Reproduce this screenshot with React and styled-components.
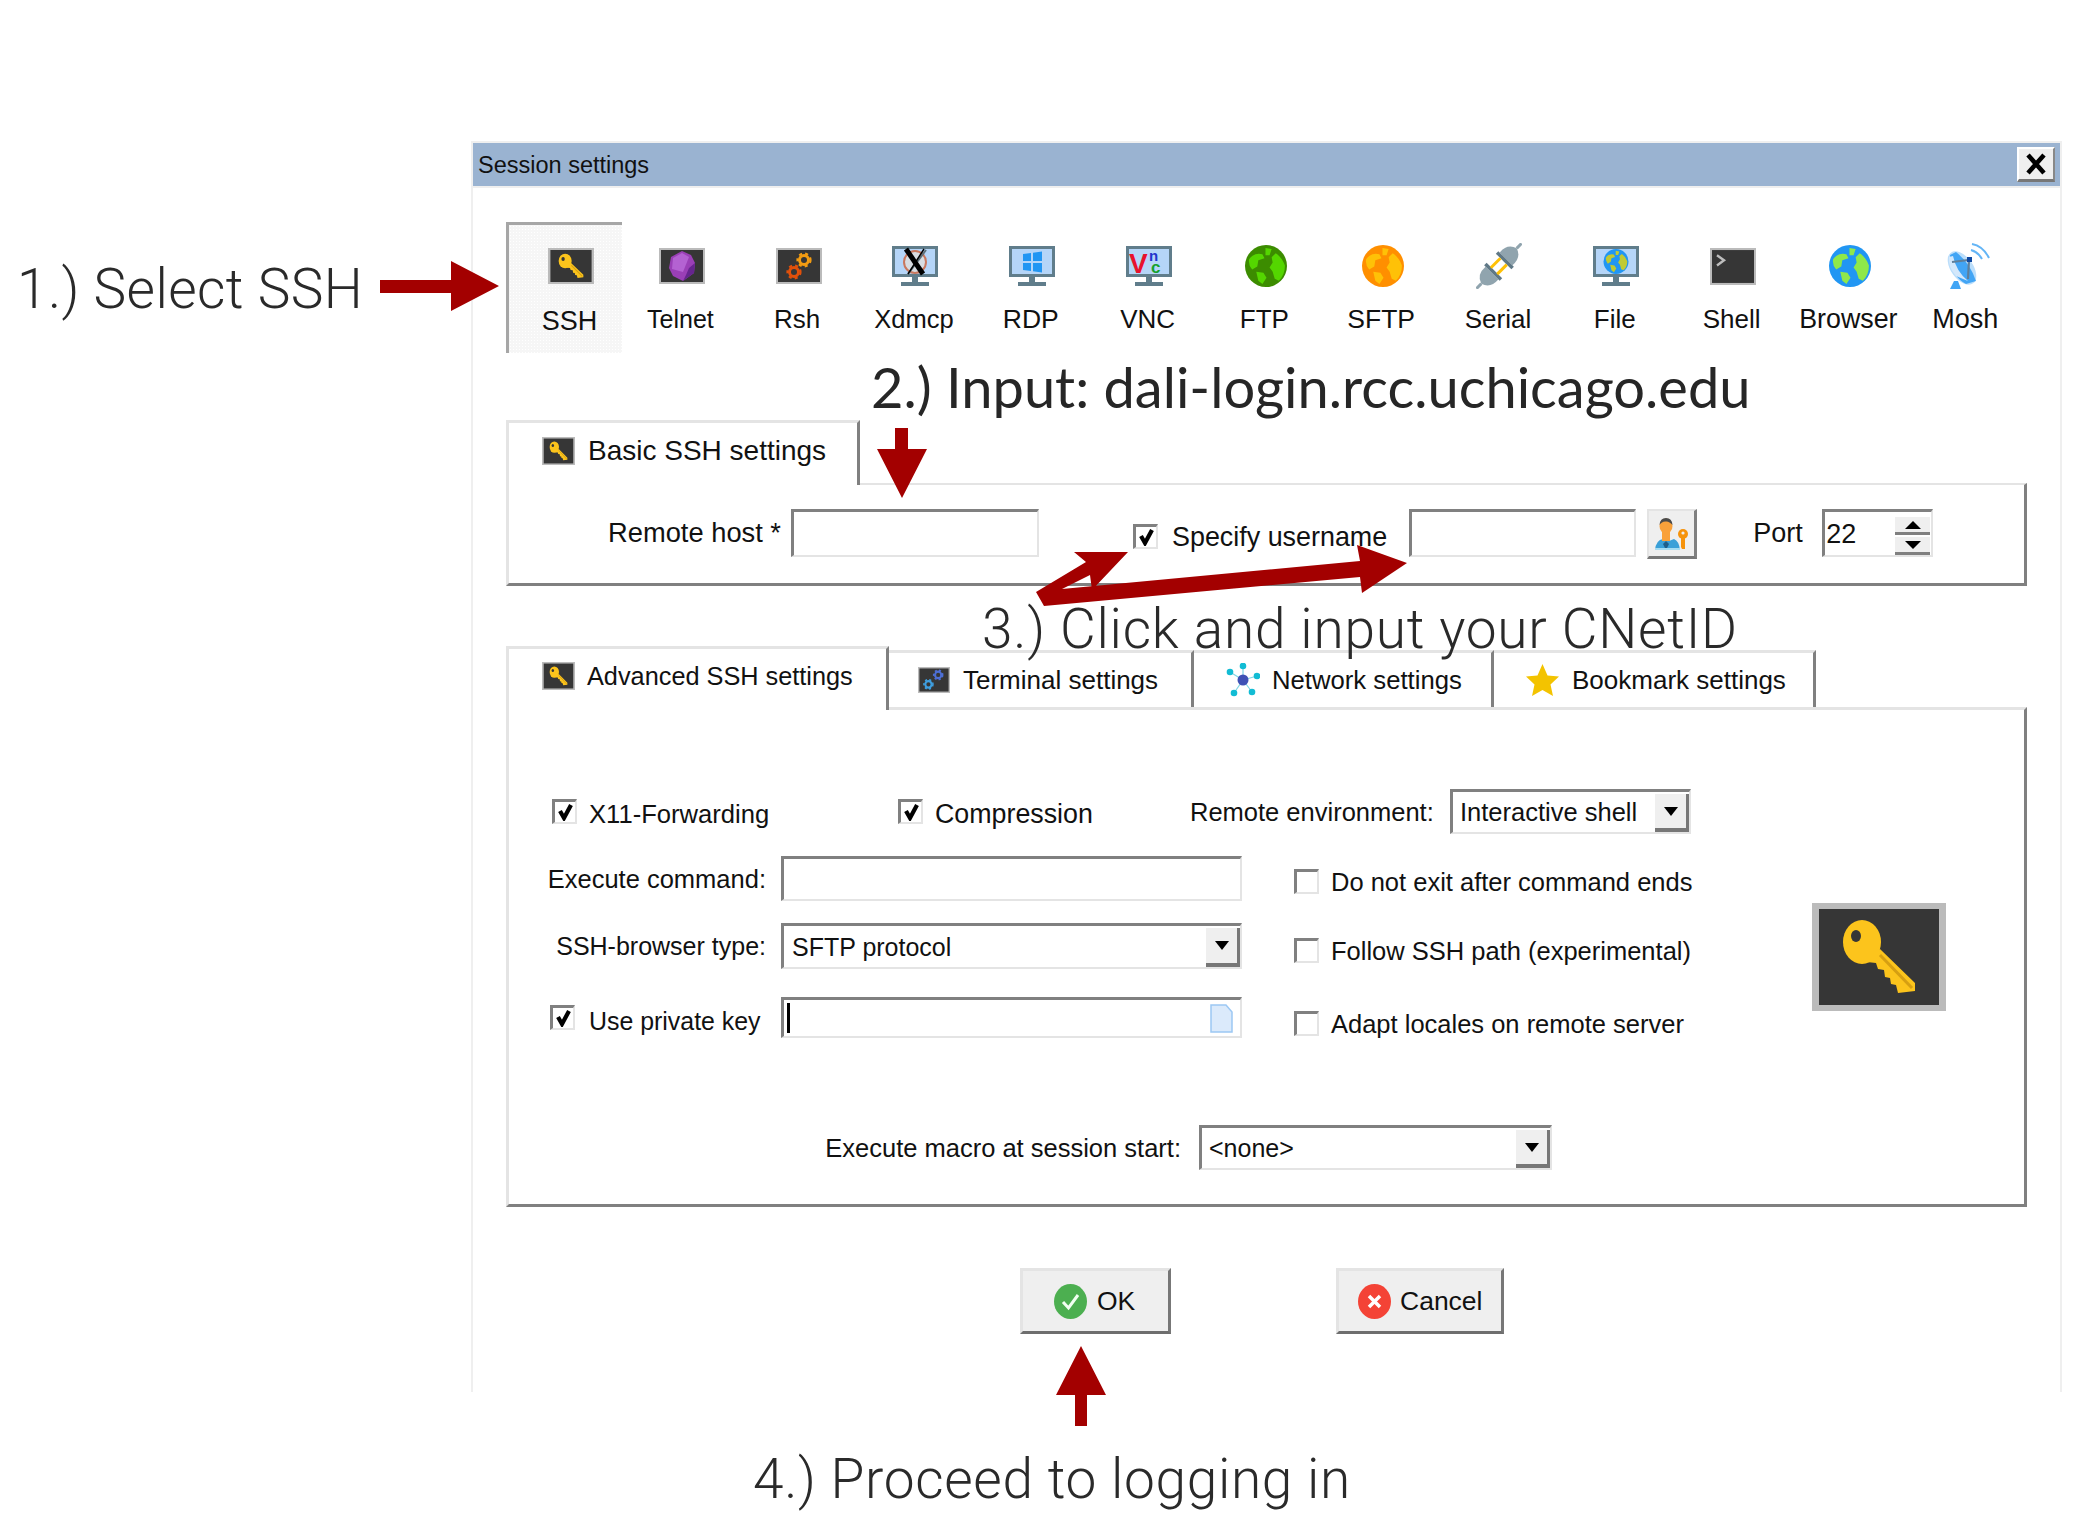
import React from 'react';
import styled, { createGlobalStyle } from 'styled-components';

const Global = createGlobalStyle`
  html, body { margin: 0; padding: 0; background: #fff; }
  body { font-family: "Liberation Sans", Arial, sans-serif; color: #111; }
  * { box-sizing: border-box; }
`;

const DARK = '#808080';
const LIGHT = '#e4e4e4';
const RED = '#a30000';

const Page = styled.div`
  position: relative; width: 2086px; height: 1536px; overflow: hidden; padding: 141px 0 0 471px;
`;
const Window = styled.div`
  width: 1591px; height: 1251px;
  border-top: 2px solid #efefef; border-left: 2px solid #efefef; border-right: 2px solid #efefef;
`;
const TitleBar = styled.div`
  height: 45px; background: #9ab3d1; border-bottom: 2px solid #efefef;
  display: flex; align-items: center; justify-content: space-between; padding: 0 5px;
`;
const TitleText = styled.span`font-size: 23.5px; line-height: 43px; color: #111; padding-top: 2px;`;
const CloseButton = styled.div`
  width: 38px; height: 35px; background: #efefef; display: flex; align-items: center; justify-content: center;
  border-top: 2px solid #fff; border-left: 2px solid #fff; border-right: 2px solid #888; border-bottom: 3px solid #777;
`;

const TileRow = styled.div`display: flex; margin: 34px 0 0 33px; height: 131px;`;
const Tile = styled.div`
  width: ${p => (p.$active ? '116px' : '116.8px')}; height: 131px; display: flex; flex-direction: column; align-items: center;
  padding-top: ${p => (p.$active ? '18px' : '21px')}; padding-left: ${p => (p.$active ? '8px' : '0')};
  ${p => p.$active ? `
    border-top: 3px solid #a6a6a6; border-left: 3px solid #a6a6a6;
    background-color: #f6f6f6;
    background-image: radial-gradient(#fff 0.8px, transparent 1px);
    background-size: 3px 3px;
  ` : ''}
`;
const TileIcon = styled.div`height: 46px; display: flex; align-items: center; justify-content: center; margin-left: 3px;`;
const TileLabel = styled.span`
  font-size: ${p => p.$s || 26.5}px; line-height: 30px; margin-top: ${p => (p.$active ? '17px' : '15px')}; white-space: nowrap;
`;

const Section = styled.section`width: 1521px; margin: ${p => p.$mt}px 0 0 33px;`;
const TabStrip = styled.div`display: flex; align-items: flex-end; height: ${p => p.$h}px;`;
const Tab = styled.div`
  position: relative; z-index: 1; width: ${p => p.$w}px; height: ${p => p.$h}px; margin-bottom: ${p => p.$mb || 0}px;
  display: flex; align-items: center; gap: ${p => p.$gap}px; background: #fff; white-space: nowrap;
  padding: 0 0 ${p => p.$pb || 0}px ${p => p.$pl}px;
  border-top: 3px solid ${LIGHT}; border-right: 3px solid ${DARK};
  ${p => (p.$first ? `border-left: 3px solid ${LIGHT};` : '')}
`;
const TabText = styled.span`font-size: ${p => p.$s || 26}px; line-height: 30px;`;

const Panel = styled.div`
  height: ${p => p.$h}px; background: #fff;
  border-top: ${p => p.$bt}px solid ${LIGHT}; border-left: 3px solid ${LIGHT};
  border-right: 3px solid ${DARK}; border-bottom: 3px solid ${DARK};
`;
const BasicRow = styled.div`display: flex; align-items: center; height: 48px; margin-top: 24px;`;
const RightLabel = styled.label`
  width: ${p => p.$w}px; text-align: right; flex: none; font-size: ${p => p.$s || 26}px; line-height: 30px; white-space: nowrap;
`;
const PortLabel = styled.label`margin-left: 56px; width: 65px; flex: none; font-size: 27px; line-height: 30px;`;

const Field = styled.div`
  position: relative; flex: none; display: flex; align-items: center;
  width: ${p => p.$w}px; height: ${p => p.$h}px; margin-left: ${p => p.$ml || 0}px; background: #fff;
  border-top: 3px solid ${DARK}; border-left: 3px solid ${DARK};
  border-right: 2px solid ${LIGHT}; border-bottom: 2px solid ${LIGHT};
`;
const FieldText = styled.span`
  font-size: ${p => p.$s || 26}px; line-height: 30px; padding-left: ${p => p.$pl}px; flex: 1; white-space: nowrap;
`;
const DropButton = styled.div`
  width: 34px; align-self: stretch; margin: 2px 0 0; background: #efefef; display: flex; align-items: center; justify-content: center;
  border-right: 3px solid #777; border-bottom: 4px solid #777;
`;
const DownTriangle = styled.i`
  display: block; width: 0; height: 0; border-left: 7px solid transparent; border-right: 7px solid transparent; border-top: 9px solid #000;
`;
const Caret = styled.i`display: block; width: 3px; height: 30px; margin-left: 3px; background: #000;`;
const FileGlyph = styled.div`margin-left: auto; margin-right: 7px; display: flex;`;

const Spin = styled.div`
  position: absolute; right: 1px; top: 5px; bottom: 0; width: 35px; display: flex; flex-direction: column; gap: 2px;
`;
const SpinButton = styled.div`
  flex: 1; background: #efefef; border-bottom: 3px solid #808080; display: flex; align-items: center; justify-content: center;
`;
const UpTriangle = styled.i`
  display: block; width: 0; height: 0; border-left: 8px solid transparent; border-right: 8px solid transparent; border-bottom: 8px solid #000;
`;
const SpinDown = styled.i`
  display: block; width: 0; height: 0; border-left: 8px solid transparent; border-right: 8px solid transparent; border-top: 8px solid #000;
`;
const IconButton = styled.div`
  flex: none; width: 50px; height: 50px; margin-left: 11px; align-self: flex-start; background: #efefef;
  display: flex; align-items: center; justify-content: center;
  border-top: 2px solid ${LIGHT}; border-left: 2px solid ${LIGHT}; border-right: 3px solid #808080; border-bottom: 3px solid #777;
`;

const CheckGroup = styled.label`
  display: flex; align-items: center; flex: none; gap: ${p => p.$gap || 12}px;
  width: ${p => (p.$w ? `${p.$w}px` : 'auto')}; margin: ${p => p.$mt || 0}px 0 0 ${p => p.$ml || 0}px; white-space: nowrap;
`;
const CheckBox = styled.span`
  flex: none; width: 25px; height: 25px; display: flex; align-items: center; justify-content: center; background: #fff;
  border-top: 3px solid ${DARK}; border-left: 3px solid ${DARK}; border-right: 2px solid ${LIGHT}; border-bottom: 2px solid ${LIGHT};
`;
const CheckText = styled.span`
  font-size: ${p => p.$s || 26}px; line-height: 26px; position: relative; top: ${p => p.$dy ?? 2}px;
`;

const TopRow = styled.div`display: flex; align-items: center; height: 45px; margin: 79px 0 0 43px;`;
const BodyRow = styled.div`display: flex; margin-top: 22px; height: 182px;`;
const LeftColumn = styled.div`width: 733px; flex: none;`;
const FieldRow = styled.div`display: flex; align-items: center; margin-top: ${p => p.$mt || 0}px; height: ${p => p.$h}px;`;
const MidColumn = styled.div`margin-left: 52px; width: 518px; flex: none; padding-top: 12px;`;
const BigKey = styled.div`margin-top: 47px; flex: none; display: flex;`;
const MacroRow = styled.div`display: flex; align-items: center; margin-top: 87px; height: 45px;`;

const ButtonRow = styled.div`display: flex; gap: 165px; margin: 61px 0 0 547px;`;
const ActionButton = styled.div`
  width: ${p => p.$w}px; height: 66px; background: #efefef; display: flex; align-items: center; gap: ${p => p.$gap}px; padding-left: ${p => p.$pl}px;
  border-top: 3px solid ${LIGHT}; border-left: 3px solid ${LIGHT}; border-right: 3px solid #777; border-bottom: 3px solid #6e6e6e;
`;
const ActionText = styled.span`font-size: 26.5px; line-height: 30px;`;

const Note = styled.div`
  position: absolute; left: ${p => p.$x}px; top: ${p => p.$y}px; white-space: nowrap; z-index: 3; line-height: 70px;
  font-family: ${p => (p.$humanist ? '"Lato", "Open Sans", sans-serif' : '"Roboto", "Liberation Sans", sans-serif')};
  font-weight: ${p => (p.$humanist ? 400 : 300)};
  font-size: ${p => p.$s}px; letter-spacing: ${p => p.$ls || 0}px; color: ${p => (p.$humanist ? '#262626' : '#2a2a2a')};
`;
const ArrowLayer = styled.svg`position: absolute; left: 0; top: 0; z-index: 4; pointer-events: none;`;

/* ---------- icons ---------- */
const CloseX = () => (
  <svg width="22" height="24" viewBox="0 0 22 24"><path d="M3 3l16 18M19 3L3 21" stroke="#000" strokeWidth="4.5" fill="none" /></svg>
);

const KeyShape = () => (
  <>
    <ellipse cx="50" cy="39" rx="19" ry="22" fill="#fcc41c" />
    <ellipse cx="44" cy="33" rx="5" ry="6" fill="#363636" />
    <path d="M62 50L68 46L103 80L103 88L86 90L84 82L79 81L78 75L73 74L72 67L66 66L64 60L55 59Z" fill="#fcc41c" />
    <path d="M68 52L100 85" stroke="#d69f12" strokeWidth="3" />
  </>
);
const KeyIcon = ({ w = 46, h = 36 }) => (
  <svg width={w} height={h} viewBox="0 0 134 108" preserveAspectRatio="none">
    <rect width="134" height="108" fill="#bbb" />
    <rect x="7" y="6" width="120" height="96" fill="#363636" />
    <KeyShape />
  </svg>
);
const DarkTile = ({ w = 46, h = 36, children }) => (
  <svg width={w} height={h} viewBox="0 0 46 36" preserveAspectRatio="none">
    <rect width="46" height="36" fill="#bbb" />
    <rect x="2" y="2" width="42" height="32" fill="#363636" />
    {children}
  </svg>
);
const TelnetIcon = () => (
  <DarkTile>
    <path d="M23 3L32 7L36 15L35 25L24 33L14 28L10 20L12 9Z" fill="#9a3fb6" />
    <path d="M14 10L23 5L30 9L24 24L13 21Z" fill="#b462d2" />
    <path d="M24 33L35 25L36 15L30 20L27 27Z" fill="#66258f" />
  </DarkTile>
);
const Gear = ({ cx, cy, color, r = 4.5 }) => (
  <g>
    <circle cx={cx} cy={cy} r={r} fill="none" stroke={color} strokeWidth="3" />
    <circle cx={cx} cy={cy} r={r + 2} fill="none" stroke={color} strokeWidth="2.2" strokeDasharray="3 3.2" />
  </g>
);
const RshIcon = () => (
  <DarkTile>
    <Gear cx={28} cy={12} color="#f39c12" />
    <Gear cx={18} cy={24} color="#e2500a" />
  </DarkTile>
);
const TerminalIcon = () => (
  <DarkTile w={32} h={26}>
    <Gear cx={29} cy={11} color="#4d6fd6" />
    <Gear cx={15} cy={24} color="#3f9fe0" />
  </DarkTile>
);
const ShellIcon = () => (
  <DarkTile h={37}>
    <path d="M7 7L14 12L7 17" fill="none" stroke="#bdbdbd" strokeWidth="2.4" />
  </DarkTile>
);
const Monitor = ({ children }) => (
  <svg width="46" height="41" viewBox="0 0 46 41">
    <rect width="46" height="31" fill="#607d8b" />
    <rect x="3" y="3" width="40" height="25" fill="#b5d5f8" />
    {children}
    <rect x="20" y="31" width="6" height="5" fill="#607d8b" />
    <rect x="9" y="36" width="28" height="4" fill="#607d8b" />
  </svg>
);
const XdmcpIcon = () => (
  <Monitor>
    <circle cx="23" cy="16" r="11" fill="#d8dde2" stroke="#c9785e" strokeWidth="2" />
    <path d="M34 4L16 28" stroke="#5d6f78" strokeWidth="2" />
    <path d="M14 3L31 28" stroke="#000" strokeWidth="5" />
    <path d="M32 3L16 28" stroke="#000" strokeWidth="1.500" />
  </Monitor>
);
const RdpIcon = () => (
  <Monitor>
    <path d="M14 8L22 7V15H14ZM24 6.700L33 5.500V15H24ZM14 17H22V25L14 24ZM24 17H33V26.500L24 25.300Z" fill="#2196f3" />
  </Monitor>
);
const VncLetter = styled.text`font-family: "Liberation Sans", sans-serif; font-weight: 700;`;
const VncIcon = () => (
  <Monitor>
    <VncLetter x="3" y="27" fontSize="28" fill="#e8112d">V</VncLetter>
    <VncLetter x="23" y="15" fontSize="15" fill="#2233cc">n</VncLetter>
    <VncLetter x="25" y="27" fontSize="17" fill="#16a02c">c</VncLetter>
  </Monitor>
);
const Continents = ({ fill }) => (
  <path fill={fill} d="M4 14Q9 7 17 9L19 13L13 15L12 21L7 24Q3 19 4 14ZM20 3L26 4L24 10L20 10ZM30 8Q36 12 39 20Q39 29 33 35L29 33L27 26L24 22L27 17L26 12ZM11 26L18 27L21 32L17 38L13 35Z" />
);
const Globe = ({ base, land, size = 42 }) => (
  <svg width={size} height={size} viewBox="0 0 41 41">
    <circle cx="20.500" cy="20.500" r="20.500" fill={base} />
    <Continents fill={land} />
  </svg>
);
const FileIcon = () => (
  <Monitor>
    <g transform="translate(10.500 3) scale(0.61)">
      <circle cx="20.500" cy="20.500" r="20.500" fill="#2196f3" />
      <Continents fill="#c0ca33" />
    </g>
  </Monitor>
);
const SerialIcon = () => (
  <svg width="46" height="46" viewBox="-23 -23 46 46">
    <g transform="rotate(-45)">
      <path d="M-10 -9Q-22 -10 -25 0Q-22 10 -10 9Z" fill="#90a4ae" />
      <path d="M-25 0H-32" stroke="#90a4ae" strokeWidth="3" />
      <path d="M10 -9Q22 -10 25 0Q22 10 10 9Z" fill="#90a4ae" />
      <path d="M25 0H32" stroke="#90a4ae" strokeWidth="3" />
      <rect x="-10" y="-11" width="3.500" height="22" fill="#5f7886" />
      <rect x="6.500" y="-11" width="3.500" height="22" fill="#5f7886" />
      <rect x="-7" y="-6" width="13.500" height="3" fill="#ffc107" />
      <rect x="-7" y="3" width="13.500" height="3" fill="#ffc107" />
    </g>
  </svg>
);
const MoshIcon = () => (
  <svg width="46" height="46" viewBox="0 0 46 46">
    <path d="M6 46H17L14 38H10Z" fill="#42a5f5" />
    <ellipse cx="18" cy="25" rx="11" ry="19" transform="rotate(-36 18 25)" fill="#bbdefb" />
    <path d="M6 12L12 9Q26 20 32 38L22 41Q8 34 6 12Z" fill="#42a5f5" />
    <path d="M9 13Q12 28 24 38L12 33Q4 24 5 14Z" fill="#d4e8fb" />
    <path d="M8 19L25 17L24 36" fill="none" stroke="#5f7f9a" strokeWidth="2.200" />
    <rect x="23" y="14" width="5" height="5" fill="#0d47a1" />
    <path d="M28 1Q39 3 45 15M27 7Q34 9 38 16" fill="none" stroke="#64b5f6" strokeWidth="2" />
  </svg>
);
const NetworkIcon = () => (
  <svg width="34" height="35" viewBox="0 0 34 35">
    <path d="M17 17L17 3M17 17L4 9M17 17L31 13M17 17L8 30M17 17L26 29" stroke="#7fd6e6" strokeWidth="1.200" />
    <circle cx="17" cy="17" r="5.500" fill="#3f51b5" />
    {[[17, 3], [4, 9], [31, 13], [8, 30], [26, 29]].map(([cx, cy]) => (
      <circle key={cx} cx={cx} cy={cy} r="3.300" fill="#12bcd4" />
    ))}
  </svg>
);
const StarIcon = () => (
  <svg width="33" height="32" viewBox="0 0 33 32">
    <path d="M16.500 0L21.500 11.500L33 12.500L24.500 20.500L27 32L16.500 26L6 32L8.500 20.500L0 12.500L11.500 11.500Z" fill="#f3c300" />
  </svg>
);
const UserKeyIcon = () => (
  <svg width="33" height="33" viewBox="0 0 33 33">
    <path d="M0 33Q1 23 8 22L14 24L19 22Q24 24 25 33Z" fill="#3aa0d8" />
    <rect x="7" y="15" width="8" height="9" fill="#f9a13a" />
    <ellipse cx="11" cy="9" rx="6.500" ry="7.500" fill="#f9a13a" />
    <path d="M4.500 8Q5 1 11 1Q17 1 17.500 8Q14 4 11 4.500Q7 4 4.500 8Z" fill="#4b4b4b" />
    <path d="M8 27L11 24L14 27L11 33Z" fill="#1f5f8a" />
    <path d="M0 31H25V33H0Z" fill="#a5dcf2" />
    <circle cx="28" cy="17" r="5" fill="#f6930c" />
    <circle cx="28" cy="16" r="1.600" fill="#efefef" />
    <path d="M26 20H30V32H27L26 30Z" fill="#f6930c" />
  </svg>
);
const PageGlyph = () => (
  <svg width="23" height="29" viewBox="0 0 23 29">
    <path d="M1 1H16L22 8V28H1Z" fill="#dbeafb" stroke="#9cc8f4" strokeWidth="1.500" />
  </svg>
);
const CheckMark = () => (
  <svg width="17" height="18" viewBox="0 0 17 18"><path d="M3 8L7 15L14 2" fill="none" stroke="#000" strokeWidth="4.200" /></svg>
);
const OkIcon = () => (
  <svg width="33" height="35" viewBox="0 0 33 35">
    <ellipse cx="16.500" cy="17.500" rx="16.500" ry="17.500" fill="#4caf50" />
    <path d="M9 18L14.500 24L24 11" fill="none" stroke="#f1fff1" strokeWidth="3" />
  </svg>
);
const CancelIcon = () => (
  <svg width="33" height="35" viewBox="0 0 33 35">
    <ellipse cx="16.500" cy="17.500" rx="16.500" ry="17.500" fill="#f44336" />
    <path d="M11 12L22 23M22 12L11 23" fill="none" stroke="#fff" strokeWidth="3.500" />
  </svg>
);

const tiles = [
  ['SSH', <KeyIcon key="k" />, 27],
  ['Telnet', <TelnetIcon key="t" />, 25],
  ['Rsh', <RshIcon key="r" />, 26],
  ['Xdmcp', <XdmcpIcon key="x" />, 25.5],
  ['RDP', <RdpIcon key="d" />, 26.5],
  ['VNC', <VncIcon key="v" />, 26],
  ['FTP', <Globe key="f" base="#3c8c00" land="#54d600" />, 26],
  ['SFTP', <Globe key="s" base="#ff8f00" land="#ffc107" />, 26.5],
  ['Serial', <SerialIcon key="e" />, 26],
  ['File', <FileIcon key="i" />, 26],
  ['Shell', <ShellIcon key="h" />, 26],
  ['Browser', <Globe key="b" base="#2196f3" land="#8fe84a" />, 26.8],
  ['Mosh', <MoshIcon key="m" />, 27],
];

const Check = ({ on = true, text, s, gap, w, ml, mt, dy }) => (
  <CheckGroup $gap={gap} $w={w} $ml={ml} $mt={mt}>
    <CheckBox>{on && <CheckMark />}</CheckBox>
    <CheckText $s={s} $dy={dy}>{text}</CheckText>
  </CheckGroup>
);

export default function App() {
  return (
    <Page>
      <Global />
      <Window>
        <TitleBar>
          <TitleText>Session settings</TitleText>
          <CloseButton><CloseX /></CloseButton>
        </TitleBar>

        <TileRow>
          {tiles.map(([label, icon, s], i) => (
            <Tile key={label} $active={i === 0}>
              <TileIcon>{icon}</TileIcon>
              <TileLabel $s={s} $active={i === 0}>{label}</TileLabel>
            </Tile>
          ))}
        </TileRow>

        <Section $mt={67}>
          <TabStrip $h={63}>
            <Tab $first $w={354} $h={65} $mb={-2} $pl={33} $gap={13} $pb={6}>
              <KeyIcon w={33} h={28} />
              <TabText $s={28}>Basic SSH settings</TabText>
            </Tab>
          </TabStrip>
          <Panel $h={103} $bt={2}>
            <BasicRow>
              <RightLabel $w={272} $s={27.3}>Remote host *</RightLabel>
              <Field $w={248} $h={48} $ml={10} />
              <Check text="Specify username" s={26.9} gap={14} ml={94} mt={6} dy={1} />
              <Field $w={227} $h={48} $ml={22} />
              <IconButton><UserKeyIcon /></IconButton>
              <PortLabel>Port</PortLabel>
              <Field $w={111} $h={48} $ml={4}>
                <FieldText $s={27} $pl={1}>22</FieldText>
                <Spin>
                  <SpinButton><UpTriangle /></SpinButton>
                  <SpinButton><SpinDown /></SpinButton>
                </Spin>
              </Field>
            </BasicRow>
          </Panel>
        </Section>

        <Section $mt={60}>
          <TabStrip $h={61}>
            <Tab $first $w={383} $h={64} $mb={-3} $pl={33} $gap={12} $pb={7}>
              <KeyIcon w={33} h={28} />
              <TabText $s={25.3}>Advanced SSH settings</TabText>
            </Tab>
            <Tab $w={305} $h={57} $pl={29} $gap={13}>
              <TerminalIcon />
              <TabText>Terminal settings</TabText>
            </Tab>
            <Tab $w={300} $h={57} $pl={32} $gap={12}>
              <NetworkIcon />
              <TabText $s={25.7}>Network settings</TabText>
            </Tab>
            <Tab $w={322} $h={57} $pl={32} $gap={13}>
              <StarIcon />
              <TabText>Bookmark settings</TabText>
            </Tab>
          </TabStrip>
          <Panel $h={500} $bt={3}>
            <TopRow>
              <Check text="X11-Forwarding" s={25.6} w={346} />
              <Check text="Compression" s={26.8} w={292} />
              <RightLabel $w={243} $s={25.5}>Remote environment:</RightLabel>
              <Field $w={241} $h={45} $ml={17}>
                <FieldText $pl={7} $s={25.5}>Interactive shell</FieldText>
                <DropButton><DownTriangle /></DropButton>
              </Field>
            </TopRow>

            <BodyRow>
              <LeftColumn>
                <FieldRow $h={45}>
                  <RightLabel $w={257} $s={25.5}>Execute command:</RightLabel>
                  <Field $w={461} $h={45} $ml={15} />
                </FieldRow>
                <FieldRow $h={46} $mt={22}>
                  <RightLabel $w={257} $s={25}>SSH-browser type:</RightLabel>
                  <Field $w={461} $h={46} $ml={15}>
                    <FieldText $pl={8} $s={25}>SFTP protocol</FieldText>
                    <DropButton><DownTriangle /></DropButton>
                  </Field>
                </FieldRow>
                <FieldRow $h={41} $mt={28}>
                  <Check text="Use private key" ml={41} gap={14} w={231} s={24.9} dy={3} />
                  <Field $w={461} $h={41} $ml={0}>
                    <Caret />
                    <FileGlyph><PageGlyph /></FileGlyph>
                  </Field>
                </FieldRow>
              </LeftColumn>
              <MidColumn>
                <Check on={false} text="Do not exit after command ends" s={25.5} dy={1} />
                <Check on={false} text="Follow SSH path (experimental)" s={25.5} mt={43} dy={1} />
                <Check on={false} text="Adapt locales on remote server" s={25.5} mt={47} dy={1} />
              </MidColumn>
              <BigKey><KeyIcon w={134} h={108} /></BigKey>
            </BodyRow>

            <MacroRow>
              <RightLabel $w={672} $s={25.5}>Execute macro at session start:</RightLabel>
              <Field $w={353} $h={45} $ml={18}>
                <FieldText $pl={7} $s={25}>&lt;none&gt;</FieldText>
                <DropButton><DownTriangle /></DropButton>
              </Field>
            </MacroRow>
          </Panel>
        </Section>

        <ButtonRow>
          <ActionButton $w={151} $pl={31} $gap={10}><OkIcon /><ActionText>OK</ActionText></ActionButton>
          <ActionButton $w={168} $pl={19} $gap={9}><CancelIcon /><ActionText>Cancel</ActionText></ActionButton>
        </ButtonRow>
      </Window>

      <Note $x={17} $y={254} $s={55} $ls={0.4}>1.) Select SSH</Note>
      <Note $x={871} $y={352} $s={56} $humanist>2.) Input: dali-login.rcc.uchicago.edu</Note>
      <Note $x={982} $y={594} $s={55} $ls={0.75}>3.) Click and input your CNetID</Note>
      <Note $x={753} $y={1444} $s={55} $ls={0.65}>4.) Proceed to logging in</Note>

      <ArrowLayer width="2086" height="1536" viewBox="0 0 2086 1536">
        <g fill={RED}>
          <path d="M380 280H451V261L499 286L451 311V293H380Z" />
          <path d="M895 428H908V449H927L902 498L877 449H895Z" />
          <path d="M1360 561L1357 545L1407 563L1362 593L1360 577L1044 606L1036 592L1086 562L1074 552H1128L1092 590L1090 575L1062 589Z" />
          <path d="M1075 1426V1395H1056L1081 1346L1106 1395H1087V1426Z" />
        </g>
      </ArrowLayer>
    </Page>
  );
}
